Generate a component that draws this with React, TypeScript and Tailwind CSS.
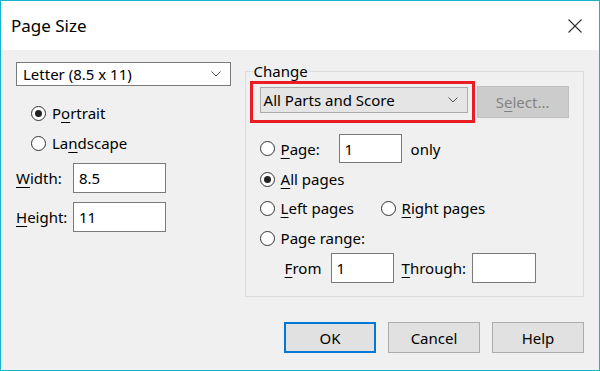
import React from "react";

function Radio({ checked }: { checked?: boolean }) {
  return (
    <span className="w-[15px] h-[15px] shrink-0 rounded-full border border-[#333333] bg-white flex items-center justify-center">
      {checked && <span className="w-[7px] h-[7px] rounded-full bg-[#222222]" />}
    </span>
  );
}

function Chevron() {
  return (
    <svg width="10" height="6" viewBox="0 0 10 6" className="shrink-0">
      <polyline points="0.5,0.5 5,5 9.5,0.5" fill="none" stroke="#555" strokeWidth="1" />
    </svg>
  );
}

function RadioRow({ checked, children, className = "" }: { checked?: boolean; children: React.ReactNode; className?: string }) {
  return (
    <div className={"flex items-center gap-[6px] h-[22px] " + className}>
      <Radio checked={checked} />
      <span>{children}</span>
    </div>
  );
}

function Field({ value, w }: { value: string; w: string }) {
  return (
    <div className={"h-[30px] bg-white border border-[#7a7a7a] flex items-center px-[5px] " + w}>{value}</div>
  );
}

const u = "underline underline-offset-[3px] decoration-1";

export default function App() {
  return (
    <div
      className="w-[600px] h-[371px] bg-[#f0f0f0] border border-[#18b4cb] flex flex-col text-[15px] text-black leading-[20px]"
      style={{ fontFamily: '"Noto Sans", "Open Sans", sans-serif' }}
    >
      {/* Title bar */}
      <div className="h-[49px] bg-white flex items-center justify-between pl-[10px] pr-[17px] shrink-0">
        <span className="text-[17px]">Page Size</span>
        <svg width="14" height="14" viewBox="0 0 14 14">
          <line x1="0.5" y1="0.5" x2="13.5" y2="13.5" stroke="#333" strokeWidth="1.1" />
          <line x1="13.5" y1="0.5" x2="0.5" y2="13.5" stroke="#333" strokeWidth="1.1" />
        </svg>
      </div>

      <div className="flex px-[15px]">
        {/* Left column */}
        <div className="w-[215px] flex flex-col">
          <div className="mt-[12px] h-[24px] bg-white border border-[#7a7a7a] flex items-center justify-between pl-[6px] pr-[9px]">
            <span>Letter (8.5 x 11)</span>
            <Chevron />
          </div>
          <div className="pl-[15px] flex flex-col">
            <RadioRow checked className="mt-[16px]">
              P<span className={u}>o</span>rtrait
            </RadioRow>
            <RadioRow className="mt-[8px]">
              La<span className={u}>n</span>dscape
            </RadioRow>
          </div>
          <div className="mt-[9px] flex items-center">
            <span className="w-[57px]">
              <span className={u}>W</span>idth:
            </span>
            <Field value="8.5" w="w-[93px]" />
          </div>
          <div className="mt-[9px] flex items-center">
            <span className="w-[57px]">
              <span className={u}>H</span>eight:
            </span>
            <Field value="11" w="w-[93px]" />
          </div>
        </div>

        {/* Change group */}
        <div className="ml-[14px] mt-[21px] w-[340px] h-[226px] border border-[#dcdcdc] relative flex flex-col pl-[4px]">
          <span className="absolute left-[7px] top-[-11px] bg-[#f0f0f0] px-[1px]">Change</span>
          <div className="flex items-start mt-[9px]">
            <div className="w-[225px] h-[42px] border-[3px] border-[#ec1c24] pl-[7px] pt-[3px]">
              <div className="w-[208px] h-[26px] bg-[#e5e5e5] border border-[#acacac] flex items-center justify-between pl-[3px] pr-[9px]">
                <span>All Parts and Score</span>
                <Chevron />
              </div>
            </div>
            <div className="ml-[2px] mt-[5px] w-[92px] h-[32px] bg-[#cccccc] border border-[#bfbfbf] text-[#838383] flex items-center justify-center">
              <span>
                S<span className={u}>e</span>lect...
              </span>
            </div>
          </div>

          <div className="pl-[10px] flex flex-col">
            <div className="mt-[11px] flex items-center h-[29px]">
              <div className="flex items-center gap-[6px] w-[79px]">
                <Radio />
                <span>
                  <span className={u}>P</span>age:
                </span>
              </div>
              <div className="w-[63px] h-[29px] bg-white border border-[#7a7a7a] flex items-center px-[5px]">1</div>
              <span className="ml-[9px]">only</span>
            </div>
            <RadioRow checked className="mt-[5px]">
              <span className={u}>A</span>ll pages
            </RadioRow>
            <div className="mt-[7px] flex">
              <RadioRow className="w-[121px]">
                <span className={u}>L</span>eft pages
              </RadioRow>
              <RadioRow>
                <span className={u}>R</span>ight pages
              </RadioRow>
            </div>
            <RadioRow className="mt-[8px]">Page range:</RadioRow>
            <div className="mt-[4px] flex items-center pl-[25px]">
              <span className="w-[46px]">
                <span className={u}>F</span>rom
              </span>
              <Field value="1" w="w-[63px]" />
              <span className="ml-[8px] w-[70px]">
                <span className={u}>T</span>hrough:
              </span>
              <Field value="" w="w-[64px]" />
            </div>
          </div>
        </div>
      </div>

      {/* Buttons */}
      <div className="mt-[25px] flex justify-end gap-[12px] pr-[15px]">
        <button className="w-[92px] h-[31px] bg-[#e1e1e1] border-2 border-[#0078d7] flex items-center justify-center">OK</button>
        <button className="w-[92px] h-[31px] bg-[#e1e1e1] border border-[#adadad] flex items-center justify-center">Cancel</button>
        <button className="w-[92px] h-[31px] bg-[#e1e1e1] border border-[#adadad] flex items-center justify-center">Help</button>
      </div>
    </div>
  );
}
